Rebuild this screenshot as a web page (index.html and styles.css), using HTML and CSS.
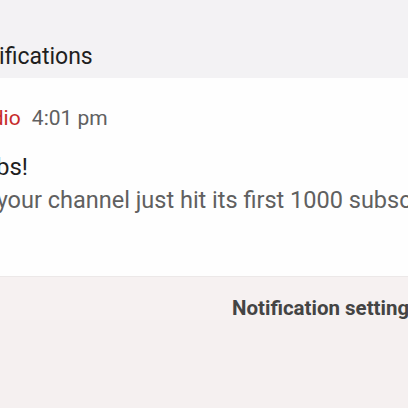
FILE: index.html
```html
<!DOCTYPE html>
<html lang="en">
<head>
  <meta charset="UTF-8">
  <title>Notifications</title>
  <link rel="stylesheet" href="styles.css">
</head>
<body>
  <div class="pagina">
    <header class="topo">
      <h1>Notifications</h1>
    </header>
    <div class="cartao">
      <div class="avatar"></div>
      <div class="texto">
        <div class="meta">
          <span class="fonte">YouTube Studio</span>
          <span class="hora">4:01 pm</span>
        </div>
        <h2>Wow, 1K subs!</h2>
        <p>Nice to see your channel just hit its first 1000 subscribers</p>
      </div>
    </div>
    <div class="rodape">
      <button class="config">Notification settings</button>
    </div>
  </div>
</body>
</html>
```

FILE: styles.css
```css
html, body {
  margin: 0;
  padding: 0;
  overflow: hidden;
  height: 408px;
  background: #f5f0f0;
  font-family: Roboto, "Noto Sans", sans-serif;
}
.pagina {
  margin-left: -150px;
  width: 800px;
}
.topo {
  background: #f3f2f4;
  height: 78px;
  padding-left: 112px;
  box-sizing: border-box;
}
.topo h1 {
  margin: 0;
  padding-top: 43px;
  font-size: 23px;
  font-weight: 400;
  color: #1f1f1f;
  line-height: 28px;
}
.cartao {
  background: #fefefe;
  height: 198px;
  display: flex;
  border-bottom: 1px solid #ece8e8;
}
.avatar {
  width: 24px;
  flex: none;
}
.texto {
  padding-top: 27px;
}
.meta {
  font-size: 21px;
  line-height: 26px;
}
.fonte {
  color: #c62b2b;
  margin-right: 6px;
}
.hora {
  color: #606060;
}
.texto h2 {
  margin: 21px 0 0;
  font-size: 24px;
  font-weight: 400;
  color: #1f1f1f;
  line-height: 30px;
}
.texto p {
  margin: 5px 0 0;
  font-size: 23.5px;
  color: #606060;
  line-height: 26px;
  white-space: nowrap;
}
.rodape {
  background: #f6f1f1;
  padding: 19px 0 0 382px;
}
.config {
  background: none;
  border: none;
  padding: 0;
  font-family: inherit;
  font-size: 20.5px;
  font-weight: 700;
  color: #444;
  cursor: pointer;
}
```
